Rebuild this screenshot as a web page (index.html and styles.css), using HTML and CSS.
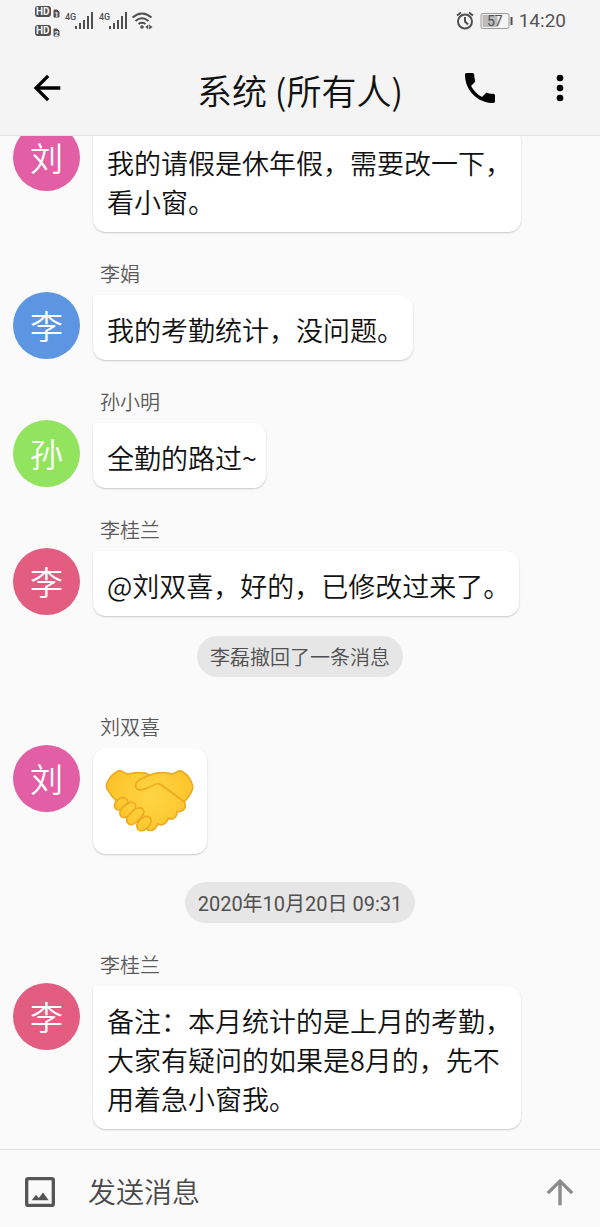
FILE: index.html
```html
<!DOCTYPE html>
<html lang="zh-CN">
<head>
<meta charset="utf-8">
<meta name="viewport" content="width=device-width, initial-scale=1">
<title>系统 (所有人)</title>
<link rel="stylesheet" href="styles.css">
</head>
<body>
<div class="app">
  <div class="status">
    <svg class="status-net" width="122" height="34" viewBox="32 3 122 34" aria-hidden="true">
      <g class="ink">
        <rect x="35" y="6" width="16" height="11" rx="3"/>
        <rect x="35" y="25" width="16" height="11" rx="3"/>
        <path d="M54 10h3l2 2v5h-5zM54 29h3l2 2v5h-5z" stroke="#505050" stroke-linejoin="round"/>
        <path d="M75 26h2v3h-2zM79 23h2v6h-2zM83 20h2v9h-2zM87 16h2v13h-2zM91 12h2v17h-2z"/>
        <path d="M109 26h2v3h-2zM113 23h2v6h-2zM117 20h2v9h-2zM121 16h2v13h-2zM125 12h2v17h-2z"/>
        <circle cx="142" cy="27" r="1.8"/>
        <path d="M148.300 24.500v5l-3-2.500zM149.200 24.500v5l3.300-2.500z"/>
      </g>
      <text class="hd" x="36" y="15">HD</text>
      <text class="hd" x="36" y="34">HD</text>
      <text class="sim" x="54.500" y="16.500">1</text>
      <text class="sim" x="54.500" y="35.500">2</text>
      <text class="gen" x="65" y="20">4G</text>
      <text class="gen" x="99" y="20">4G</text>
      <path class="line" d="M132.500 17.500q9.500-8 19 0M135.500 21q6.500-5.500 13 0M138.500 24q3.500-2.500 7 0"/>
    </svg>
    <div class="status-right">
      <svg width="18" height="20" viewBox="456 11 18 20" aria-hidden="true">
        <circle class="line" cx="465" cy="21.500" r="7"/>
        <path class="line" d="M465 17v4.500l3 3M457 15.500l4-3M473 15.500l-4-3"/>
      </svg>
      <svg width="33" height="18" viewBox="481 12 33 18" aria-hidden="true">
        <rect x="482" y="13.500" width="28" height="15" rx="2" class="cell"/>
        <rect x="483.500" y="15" width="15" height="12" class="charge"/>
        <rect x="511.500" y="17" width="2" height="8" class="ink"/>
        <text class="level" x="488" y="26">57</text>
      </svg>
      <time>14:20</time>
    </div>
  </div>

  <header class="bar">
    <div class="bar-side bar-back">
      <button class="icon" type="button" aria-label="返回"><svg viewBox="0 0 24 24"><path d="M20 11H7.830l5.590-5.590L12 4l-8 8 8 8 1.410-1.410L7.830 13H20z"/></svg></button>
    </div>
    <h1>系统 (所有人)</h1>
    <div class="bar-side bar-actions">
      <button class="icon" type="button" aria-label="通话"><svg viewBox="0 0 24 24"><path d="M6.620 10.790c1.440 2.830 3.760 5.140 6.590 6.590l2.200-2.200c.27-.27.67-.36 1.020-.24 1.120.37 2.330.57 3.570.57.55 0 1 .45 1 1V20c0 .55-.45 1-1 1-9.390 0-17-7.610-17-17 0-.55.45-1 1-1h3.500c.55 0 1 .45 1 1 0 1.250.2 2.450.57 3.570.11.35.03.74-.25 1.020z"/></svg></button>
      <button class="icon" type="button" aria-label="更多"><svg viewBox="0 0 24 24"><circle cx="12" cy="6" r="2"/><circle cx="12" cy="12" r="2"/><circle cx="12" cy="18" r="2"/></svg></button>
    </div>
  </header>

  <main class="log">
    <div class="list">
      <article class="msg continued">
        <div class="avatar magenta">刘</div>
        <div class="body"><p class="bubble">我的请假是休年假，需要改一下，看小窗。</p></div>
      </article>
      <article class="msg">
        <div class="avatar blue">李</div>
        <div class="body"><div class="name">李娟</div><p class="bubble">我的考勤统计，没问题。</p></div>
      </article>
      <article class="msg">
        <div class="avatar green">孙</div>
        <div class="body"><div class="name">孙小明</div><p class="bubble">全勤的路过~</p></div>
      </article>
      <article class="msg">
        <div class="avatar rose">李</div>
        <div class="body"><div class="name">李桂兰</div><p class="bubble">@刘双喜，好的，已修改过来了。</p></div>
      </article>
      <p class="notice">李磊撤回了一条消息</p>
      <article class="msg">
        <div class="avatar magenta">刘</div>
        <div class="body"><div class="name">刘双喜</div>
          <div class="bubble sticker">
            <svg width="93" height="67" viewBox="40 79 279 201" role="img" aria-label="握手">
              <defs>
                <radialGradient id="skin" gradientUnits="userSpaceOnUse" cx="185" cy="170" r="130">
                  <stop offset="0" stop-color="#ffd543"/>
                  <stop offset="1" stop-color="#fcc42a"/>
                </radialGradient>
              </defs>
              <g fill="url(#skin)" stroke="#eeaa22" stroke-width="5" stroke-linejoin="round" stroke-linecap="round">
                <path d="M85 94Q91 91 99 96L114 104Q132 98 150 99Q168 99 180 106Q202 98 224 99Q237 99 247 104L262 96Q271 91 279 96Q301 109 309 138Q311 149 304 159Q296 175 284 187Q291 201 281 211Q272 219 262 215Q263 230 252 236Q243 241 235 235Q232 249 221 254Q211 258 204 252Q200 268 187 272Q178 274 170 268L80 183Q66 171 57 155Q48 145 51 134Q59 108 85 94Z"/>
                <path d="M78 187Q90 172 104 174Q116 179 114 190Q110 200 97 209Q85 214 77 206Q71 197 78 187Z"/>
                <path d="M93 210Q108 192 121 188Q135 186 138 198Q139 206 132 213L117 228Q105 238 95 231Q87 222 93 210Z"/>
                <path d="M114 231Q130 210 144 205Q158 202 162 213Q164 222 156 231L141 247Q128 259 116 252Q107 243 114 231Z"/>
                <path d="M144 249Q155 233 168 230Q181 229 184 240Q186 249 179 258L171 267Q160 277 147 271Q138 262 144 249Z"/>
                <path fill="none" d="M180 106Q162 113 147 122Q136 130 138 141Q142 153 157 150Q174 147 190 137Q203 128 216 136L284 187"/>
              </g>
            </svg>
          </div>
        </div>
      </article>
      <p class="notice date">2020年10月20日 09:31</p>
      <article class="msg">
        <div class="avatar rose">李</div>
        <div class="body"><div class="name">李桂兰</div><p class="bubble">备注：本月统计的是上月的考勤，大家有疑问的如果是8月的，先不用着急小窗我。</p></div>
      </article>
    </div>
  </main>

  <form class="composer">
    <button class="icon attach" type="button" aria-label="图片"><svg viewBox="0 0 24 24"><rect x="4" y="4" width="16" height="16" rx="1" fill="none" stroke="currentColor" stroke-width="2"/><path d="M7 17l2.600-3.400 1.700 2 2.500-3.300L17.200 17z"/></svg></button>
    <input type="text" placeholder="发送消息" aria-label="发送消息">
    <button class="icon send" type="submit" aria-label="发送"><svg viewBox="0 0 24 24"><path d="M4 12l1.410 1.410L11 7.830V20h2V7.830l5.580 5.590L20 12l-8-8-8 8z"/></svg></button>
  </form>
</div>
</body>
</html>
```
FILE: styles.css
```css
* { box-sizing: border-box; }

body, h1, p { margin: 0; }

body {
  background: #fafafa;
  color: #111;
  font-family: Roboto, "Noto Sans CJK SC", sans-serif;
  font-weight: 350;
}

.app {
  display: flex;
  flex-direction: column;
  height: 100vh;
}

.status {
  display: flex;
  justify-content: space-between;
  align-items: flex-start;
  padding: 3px 34px 4px 32px;
  background: #f4f4f4;
  color: #555;
  font-weight: 400;
}

.status svg { display: block; }
.status-right { display: flex; align-items: center; gap: 6px; height: 36px; }
.status time { font-size: 19px; line-height: 24px; }

.ink { fill: #505050; }
.line { fill: none; stroke: #505050; stroke-width: 2; }
.cell { fill: none; stroke: #999; stroke-width: 1; }
.charge { fill: #bbb; }
.hd { fill: #f4f4f4; font-size: 10px; font-weight: 700; }
.sim { fill: #f4f4f4; font-size: 7px; font-weight: 700; }
.gen { fill: #505050; font-size: 9px; font-weight: 500; }
.level { fill: #505050; font-size: 14px; }

.bar {
  display: grid;
  grid-template-columns: 1fr auto 1fr;
  align-items: center;
  padding: 25px 20px 23px;
  border-bottom: 1px solid #e2e2e2;
  background: #f4f4f4;
}

.bar h1 {
  font-family: "Noto Sans CJK SC", sans-serif;
  font-size: 35px;
  font-weight: 350;
  line-height: 44px;
}

.bar-side { display: flex; align-self: start; }
.bar-back { padding-left: 7px; }
.bar-actions { justify-content: flex-end; gap: 40px; }

.icon {
  flex: none;
  width: 40px;
  height: 40px;
  padding: 0;
  border: 0;
  background: none;
  color: #000;
}

.icon svg { display: block; width: 100%; height: 100%; fill: currentColor; }

.log {
  display: flex;
  flex: 1;
  flex-direction: column-reverse;
  min-height: 0;
  overflow-y: auto;
  scrollbar-width: none;
}

.list {
  display: flex;
  flex-direction: column;
  gap: 28px;
  padding: 0 79px 20px 13px;
}

.msg { display: flex; gap: 13px; }

.avatar {
  flex: none;
  width: 67px;
  height: 67px;
  margin-top: 32px;
  padding-top: 2px;
  border-radius: 50%;
  color: #fff;
  font-size: 33px;
  line-height: 67px;
  text-align: center;
}

.continued .avatar { margin-top: 0; }
.continued .bubble { margin-top: 4px; }

.magenta { background: #e25fa5; }
.blue { background: #5c95e2; }
.green { background: #92e45f; }
.rose { background: #e25d80; }

.body { min-width: 0; }

.name {
  margin-bottom: 5px;
  padding-left: 7px;
  color: #5a5a5a;
  font-size: 20px;
  line-height: 30px;
}

.bubble {
  width: fit-content;
  padding: 15px 9px 11px 14px;
  border-radius: 2px 13px 13px 13px;
  background: #fff;
  box-shadow: 0 1px 2px rgba(0, 0, 0, 0.2);
  font-family: "Noto Sans CJK SC", sans-serif;
  font-size: 27px;
  line-height: 39px;
}

.sticker { padding: 18px 11px 21px 10px; border-radius: 13px; }
.sticker svg { display: block; }

.notice {
  align-self: center;
  margin: -8px -66px 8px 0;
  padding: 7px 13px 4px;
  border-radius: 21px;
  background: #e6e6e6;
  color: #505050;
  font-size: 20px;
  line-height: 30px;
}

.date { margin-top: 0; margin-bottom: 0; font-weight: 400; }

.composer {
  display: flex;
  align-items: center;
  gap: 28px;
  padding: 22px 20px 15px;
  border-top: 1px solid #e2e2e2;
}

.composer input {
  flex: 1;
  min-width: 0;
  height: 40px;
  padding: 3px 0 0;
  border: 0;
  outline: 0;
  background: none;
  color: #111;
  font: inherit;
  font-size: 28px;
}

.composer input::placeholder { color: #4a4a4a; opacity: 1; }
.attach { color: #555; }
.send { color: #8a8a8a; }
```
